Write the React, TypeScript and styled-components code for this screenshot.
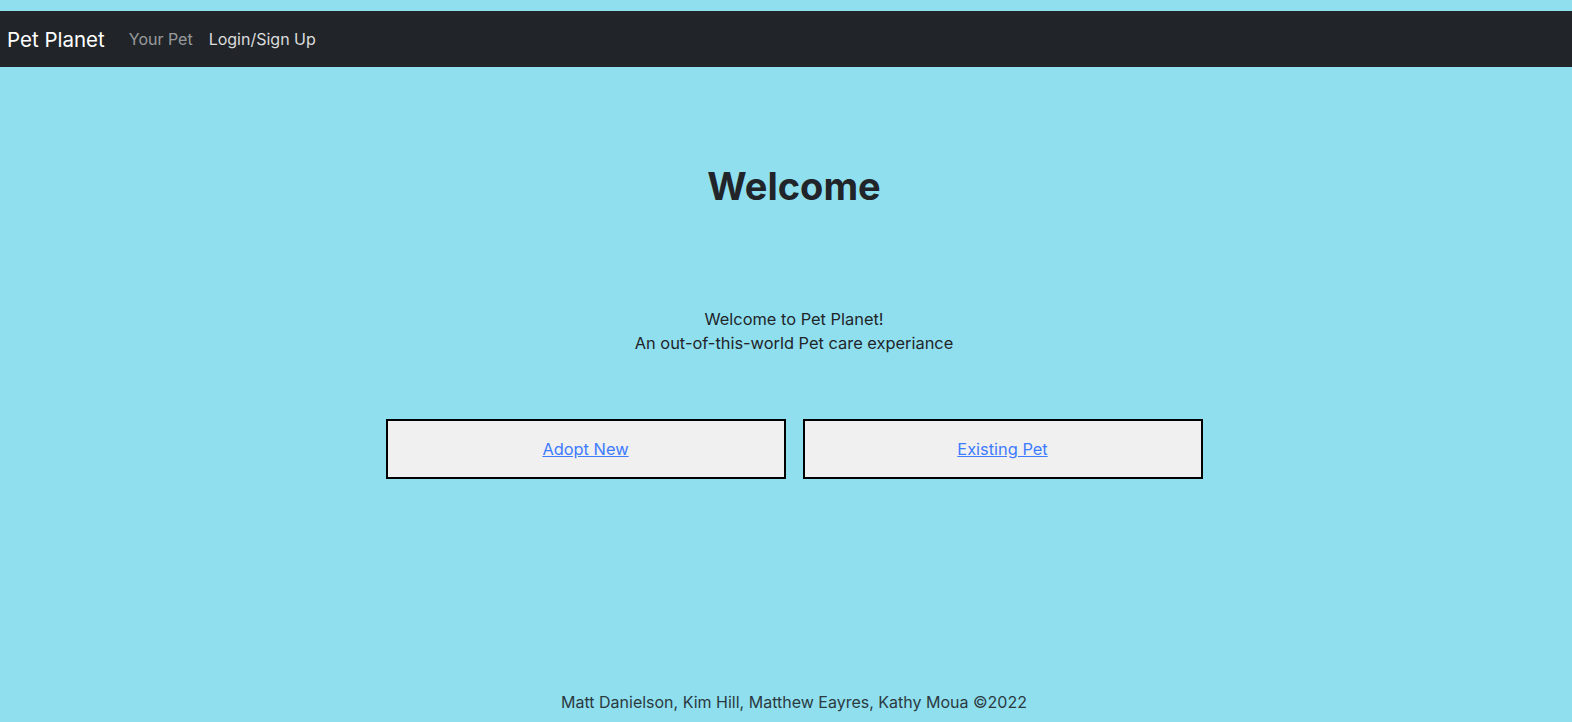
import React from "react";
import styled, { createGlobalStyle } from "styled-components";

const Global = createGlobalStyle`
  html, body { margin: 0; padding: 0; }
  body {
    background: #8fdfef;
    font-family: Inter, "Noto Sans", sans-serif;
    color: #212529;
  }
`;

const Page = styled.div`
  min-height: 722px;
  padding-top: 11px;
  display: flex;
  flex-direction: column;
`;

const Nav = styled.nav`
  height: 56px;
  background: #212529;
  display: flex;
  align-items: center;
  padding-left: 7px;
`;

const Brand = styled.a`
  font-size: 20.5px;
  color: #ffffff;
  text-decoration: none;
  margin-right: 24px;
`;

const NavLinks = styled.div`
  display: flex;
  gap: 16px;
`;

const NavLink = styled.a<{ $active?: boolean }>`
  font-size: 16px;
  text-decoration: none;
  color: ${(p) => (p.$active ? "rgba(255,255,255,0.85)" : "rgba(255,255,255,0.55)")};
`;

const Main = styled.main`
  display: flex;
  flex-direction: column;
  align-items: center;
  padding-left: 16px;
`;

const Title = styled.h1`
  margin: 95px 0 0;
  font-size: 38px;
  line-height: 48px;
  font-weight: 700;
  color: #212529;
`;

const Intro = styled.p`
  margin: 97px 0 0;
  font-size: 16.4px;
  line-height: 24px;
  text-align: center;
`;

const Choices = styled.div`
  display: flex;
  gap: 17px;
  margin-top: 64px;
`;

const Choice = styled.div`
  width: 396px;
  height: 56px;
  border: 2px solid #000;
  background: #f0f0f0;
  display: flex;
  align-items: center;
  justify-content: center;
`;

const ChoiceLink = styled.a`
  font-size: 16.4px;
  color: #3d7bff;
  text-decoration: underline;
`;

const Footer = styled.footer`
  margin-top: 211px;
  font-size: 16px;
  line-height: 24px;
  color: #2b3a3f;
  text-align: center;
  padding-left: 16px;
`;

export default function App() {
  return (
    <>
      <Global />
      <Page>
        <Nav>
          <Brand href="#">Pet Planet</Brand>
          <NavLinks>
            <NavLink href="#">Your Pet</NavLink>
            <NavLink href="#" $active>
              Login/Sign Up
            </NavLink>
          </NavLinks>
        </Nav>
        <Main>
          <Title>Welcome</Title>
          <Intro>
            Welcome to Pet Planet!
            <br />
            An out-of-this-world Pet care experiance
          </Intro>
          <Choices>
            <Choice>
              <ChoiceLink href="#">Adopt New</ChoiceLink>
            </Choice>
            <Choice>
              <ChoiceLink href="#">Existing Pet</ChoiceLink>
            </Choice>
          </Choices>
        </Main>
        <Footer>Matt Danielson, Kim Hill, Matthew Eayres, Kathy Moua ©2022</Footer>
      </Page>
    </>
  );
}
